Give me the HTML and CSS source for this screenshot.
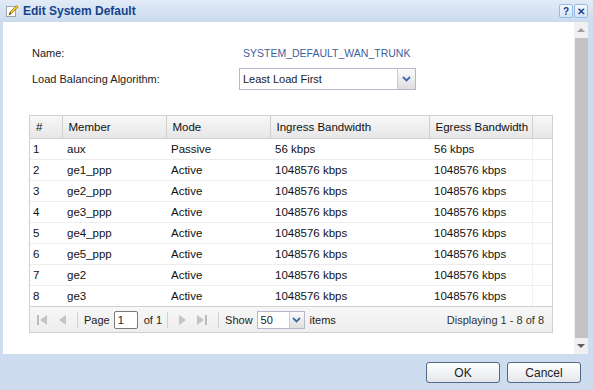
FILE: index.html
```html
<!DOCTYPE html>
<html lang="en">
<head>
  <meta charset="UTF-8">
  <title>Edit System Default</title>
  <link rel="stylesheet" href="styles.css">
</head>
<body>
  <div class="window">
    <div class="titlebar">
      <svg class="title-icon" width="14" height="14" viewBox="0 0 14 14">
        <rect x="1.5" y="2.5" width="9" height="10" fill="#fff" stroke="#9aa4b0"/>
        <path d="M4 11 L5 8 L11.5 1.5 L13 3 L6.5 9.5 Z" fill="#f3c623" stroke="#a77b12" stroke-width="0.8"/>
        <path d="M4 11 L5 8 L6.5 9.5 Z" fill="#5a4a2a"/>
      </svg>
      <span class="title">Edit System Default</span>
      <span class="tool-btn">?</span>
      <span class="tool-btn">&#x2715;</span>
    </div>

    <div class="main">
      <div class="content">
        <div class="form">
          <div class="label">Name:</div>
          <div class="value">SYSTEM_DEFAULT_WAN_TRUNK</div>
          <div class="label">Load Balancing Algorithm:</div>
          <div class="combo">
            <span class="combo-text">Least Load First</span>
            <span class="combo-arrow">
              <svg width="9" height="6" viewBox="0 0 9 6"><path d="M1 1 L4.5 4.5 L8 1" fill="none" stroke="#3d6aa8" stroke-width="1.8"/></svg>
            </span>
          </div>
        </div>

        <div class="grid">
          <table>
            <colgroup>
              <col style="width:32px"><col style="width:104px"><col style="width:104px">
              <col style="width:159px"><col style="width:103px"><col>
            </colgroup>
            <thead>
              <tr><th>#</th><th>Member</th><th>Mode</th><th>Ingress Bandwidth</th><th>Egress Bandwidth</th><th></th></tr>
            </thead>
            <tbody>
              <tr><td>1</td><td>aux</td><td>Passive</td><td>56 kbps</td><td>56 kbps</td><td></td></tr>
              <tr><td>2</td><td>ge1_ppp</td><td>Active</td><td>1048576 kbps</td><td>1048576 kbps</td><td></td></tr>
              <tr><td>3</td><td>ge2_ppp</td><td>Active</td><td>1048576 kbps</td><td>1048576 kbps</td><td></td></tr>
              <tr><td>4</td><td>ge3_ppp</td><td>Active</td><td>1048576 kbps</td><td>1048576 kbps</td><td></td></tr>
              <tr><td>5</td><td>ge4_ppp</td><td>Active</td><td>1048576 kbps</td><td>1048576 kbps</td><td></td></tr>
              <tr><td>6</td><td>ge5_ppp</td><td>Active</td><td>1048576 kbps</td><td>1048576 kbps</td><td></td></tr>
              <tr><td>7</td><td>ge2</td><td>Active</td><td>1048576 kbps</td><td>1048576 kbps</td><td></td></tr>
              <tr><td>8</td><td>ge3</td><td>Active</td><td>1048576 kbps</td><td>1048576 kbps</td><td></td></tr>
            </tbody>
          </table>

          <!-- paging toolbar -->
          <div class="pager">
            <svg class="pg-first" width="12" height="14" viewBox="0 0 12 14"><rect x="1" y="2" width="2" height="10" fill="#bcbcbc"/><path d="M11 2 L4 7 L11 12 Z" fill="#c4c4c4"/></svg>
            <svg class="pg-prev" width="12" height="14" viewBox="0 0 12 14"><path d="M9 2 L2 7 L9 12 Z" fill="#c4c4c4"/></svg>
            <span class="sep"></span>
            <span class="pg-label">Page</span>
            <span class="page-input">1</span>
            <span class="pg-of">of 1</span>
            <span class="sep"></span>
            <svg class="pg-next" width="12" height="14" viewBox="0 0 12 14"><path d="M3 2 L10 7 L3 12 Z" fill="#c4c4c4"/></svg>
            <svg class="pg-last" width="12" height="14" viewBox="0 0 12 14"><path d="M1 2 L8 7 L1 12 Z" fill="#c4c4c4"/><rect x="9" y="2" width="2" height="10" fill="#bcbcbc"/></svg>
            <span class="sep"></span>
            <span class="pg-label">Show</span>
            <span class="show-combo">
              <span class="show-text">50</span>
              <span class="combo-arrow small">
                <svg width="9" height="6" viewBox="0 0 9 6"><path d="M1 1 L4.5 4.5 L8 1" fill="none" stroke="#3d6aa8" stroke-width="1.8"/></svg>
              </span>
            </span>
            <span>items</span>
            <span class="displaying">Displaying 1 - 8 of 8</span>
          </div>
        </div>
      </div>

      <div class="scrollbar">
        <span class="arrow up"></span>
        <span class="thumb"></span>
        <span class="arrow down"></span>
      </div>
    </div>

    <div class="footer">
      <button class="btn">OK</button>
      <button class="btn">Cancel</button>
    </div>
  </div>
</body>
</html>
```

FILE: styles.css
```css
body {
  margin: 0;
  padding: 0;
  font-family: "Liberation Sans", Arial, sans-serif;
  font-size: 11px;
  color: #222;
}

.window {
  width: 593px;
  height: 390px;
  display: flex;
  flex-direction: column;
  background-color: #cddcee;
}

/* Title bar */
.titlebar {
  height: 22px;
  display: flex;
  align-items: center;
  padding: 0 5px 0 5px;
  background: linear-gradient(#e2ebf6, #cbdbee);
  box-sizing: border-box;
}

.title-icon {
  margin-right: 4px;
}

.title {
  flex: 1;
  font-weight: bold;
  font-size: 12px;
  color: #15428b;
}

.tool-btn {
  width: 14px;
  height: 14px;
  margin-left: 1px;
  border: 1px solid #99bbe8;
  border-radius: 2px;
  background: linear-gradient(#f4f8fc, #d6e3f3);
  color: #15428b;
  font-weight: bold;
  font-size: 10px;
  line-height: 14px;
  text-align: center;
  box-sizing: border-box;
}

/* Main body */
.main {
  height: 332px;
  display: flex;
  background-color: #fff;
  border-left: 3px solid #cddcee;
  border-right: 5px solid #cddcee;
}

.content {
  flex: 1;
  padding: 24px 0 0 26px;
}

.form {
  display: grid;
  grid-template-columns: 210px 177px;
  row-gap: 8px;
  align-items: center;
}

.label {
  padding-left: 3px;
  line-height: 14px;
}

.value {
  padding-left: 4px;
  color: #3e5f9c;
  font-size: 10.5px;
}

.combo {
  height: 22px;
  display: flex;
  align-items: center;
  border: 1px solid #b5b8c8;
  box-sizing: border-box;
  background-color: #fff;
}

.combo-text {
  flex: 1;
  padding-left: 3px;
}

.combo-arrow {
  width: 17px;
  height: 20px;
  display: flex;
  align-items: center;
  justify-content: center;
  border-left: 1px solid #c8ccd6;
  background: linear-gradient(#fbfbfb, #dedede);
}

.combo-arrow.small {
  width: 14px;
  height: 16px;
}

/* Grid */
.grid {
  width: 524px;
  margin-top: 25px;
  border: 1px solid #d0d0d0;
  box-sizing: border-box;
}

table {
  width: 100%;
  border-collapse: collapse;
  table-layout: fixed;
  font-size: 11.5px;
  color: #111;
}

th {
  height: 22px;
  padding: 0 0 0 6px;
  text-align: left;
  font-weight: normal;
  background: linear-gradient(#f8f8f8, #e6e6e6);
  border-right: 1px solid #d0d0d0;
  border-bottom: 1px solid #d0d0d0;
}

th:last-child {
  border-right: none;
}

td {
  height: 20px;
  padding: 0 0 0 5px;
  border-bottom: 1px solid #ededed;
  white-space: nowrap;
}

td:first-child {
  padding-left: 3px;
}

td:nth-child(5) {
  border-right: 1px solid #f0f0f0;
}

tbody tr:last-child td {
  border-bottom: none;
}

/* Paging toolbar */
.pager {
  height: 26px;
  display: flex;
  align-items: center;
  padding: 0 8px 0 6px;
  border-top: 1px solid #d0d0d0;
  background: linear-gradient(#f7f7f7, #eeeeee);
  font-size: 11px;
  color: #222;
  box-sizing: border-box;
}

.pg-first {
  margin-right: 9px;
}

.pg-prev {
  margin-right: 8px;
}

.pg-next {
  margin: 0 8px 0 8px;
}

.pg-last {
  margin-right: 10px;
}

.pg-label {
  margin: 0 4px 0 6px;
}

.pg-of {
  margin: 0 5px 0 6px;
}

.sep {
  width: 1px;
  height: 16px;
  background-color: #d2d2d2;
}

.page-input {
  width: 24px;
  height: 18px;
  line-height: 16px;
  padding-left: 3px;
  border: 1px solid #7a7a7a;
  border-radius: 2px;
  background-color: #fff;
  box-sizing: border-box;
}

.show-combo {
  width: 48px;
  height: 18px;
  margin-right: 5px;
  display: flex;
  align-items: center;
  border: 1px solid #b5b8c8;
  background-color: #fff;
  box-sizing: border-box;
}

.show-text {
  flex: 1;
  padding-left: 3px;
}

.displaying {
  margin-left: auto;
  color: #333;
}

/* Scrollbar */
.scrollbar {
  width: 14px;
  display: flex;
  flex-direction: column;
  align-items: center;
  background-color: #f0f0f0;
}

.arrow {
  width: 0;
  height: 0;
  margin: 6px 0;
  border-left: 4px solid transparent;
  border-right: 4px solid transparent;
}

.arrow.up {
  border-bottom: 4px solid #a0a0a0;
}

.arrow.down {
  border-top: 4px solid #606060;
}

.thumb {
  width: 13px;
  flex: 1;
  background-color: #c3c3c3;
}

/* Footer */
.footer {
  flex: 1;
  display: flex;
  justify-content: flex-end;
  align-items: flex-start;
  gap: 7px;
  padding: 8px 12px 0 0;
}

.btn {
  width: 74px;
  height: 21px;
  border: 1px solid #4e6a88;
  border-radius: 3px;
  background: linear-gradient(#ffffff, #e3e6ea);
  font-family: "Liberation Sans", Arial, sans-serif;
  font-size: 12px;
  color: #222;
}
```
